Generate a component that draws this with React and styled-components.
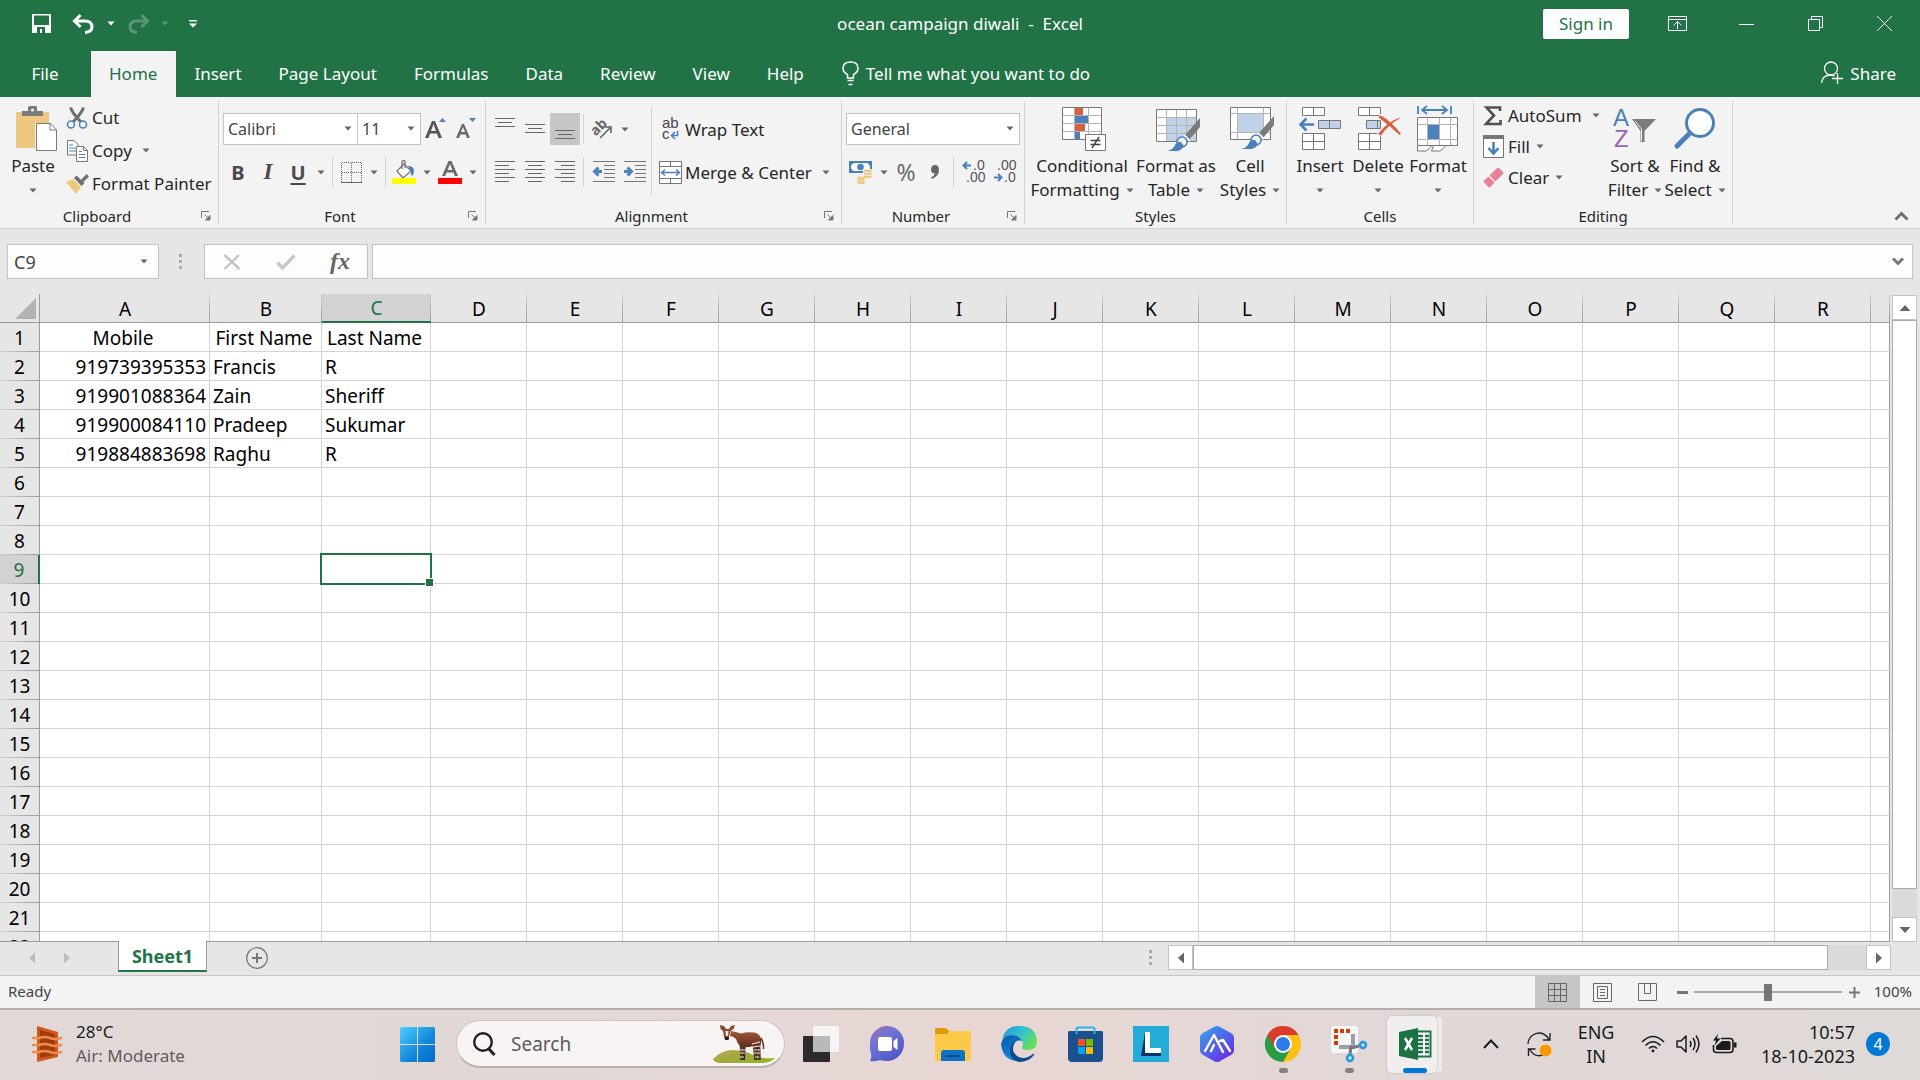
import React from 'react';
import styled, { createGlobalStyle } from 'styled-components';

const colors = {
  green: '#217346',
  ribbon: '#f3f3f3',
  chrome: '#e6e6e6',
  line: '#d2d2d2',
  grid: '#d4d4d4',
  edge: '#9b9b9b',
  box: '#c3c3c3',
  text: '#262626',
  icon: '#6a6a6a',
  blue: '#4a81bb',
  sky: '#bfd2e8',
  tan: '#eec87f',
  red: '#d9603f'
};

const uiFont = "'Noto Sans', 'Open Sans', sans-serif";

const GlobalStyle = createGlobalStyle`
  * {
    box-sizing: border-box;
  }

  body {
    margin: 0;
    font-family: ${uiFont};
    color: ${colors.text};
  }

  button, input, select {
    font-family: inherit;
    color: inherit;
  }

  button {
    padding: 0;
    border: 0;
    background: none;
    cursor: pointer;
  }

  svg {
    display: block;
    flex-shrink: 0;
    overflow: visible;
  }
`;

const AppWrapper = styled.div`
  display: flex;
  flex-direction: column;
  height: 100vh;
  overflow: hidden;
  background: ${colors.chrome};
`;

/* Title bar */

const TitleBar = styled.header`
  display: grid;
  grid-template-columns: 1fr auto 1fr;
  align-items: center;
  height: 51px;
  padding-bottom: 4px;
  background: ${colors.green};
  color: #fff;
`;

const QuickAccess = styled.div`
  display: flex;
  align-items: center;
  padding-left: 20px;
`;

const QuickButton = styled.button`
  display: flex;
  justify-content: center;
  align-items: center;
  width: ${({ $width }) => $width}px;
  height: 40px;
  opacity: ${({ disabled }) => (disabled ? 0.25 : 1)};
`;

const DocTitle = styled.h1`
  margin: 0;
  font-size: 17px;
  font-weight: 400;
  white-space: pre;
`;

const WindowControls = styled.div`
  display: flex;
  align-items: center;
  justify-content: flex-end;
  padding-right: 1px;
`;

const SignIn = styled.button`
  width: 86px;
  height: 30px;
  margin-right: 14px;
  border-radius: 2px;
  background: #fff;
  color: ${colors.green};
  font-size: 17px;
`;

const WindowButton = styled.button`
  display: flex;
  justify-content: center;
  align-items: center;
  width: 69px;
  height: 44px;
`;

/* Ribbon tabs */

const TabRow = styled.nav`
  display: flex;
  height: 46px;
  background: ${colors.green};
  color: #fff;
  font-size: 17px;
`;

const RibbonTab = styled.button`
  padding: 0 19px 2px 18px;
  min-width: ${({ $first }) => ($first ? '91px' : '0')};
  background: ${({ $active }) => ($active ? colors.ribbon : 'transparent')};
  color: ${({ $active }) => ($active ? colors.green : '#fff')};
  font-size: 17px;
`;

const TabAction = styled.button`
  display: flex;
  align-items: center;
  gap: 7px;
  margin-left: ${({ $end }) => ($end ? 'auto' : '19px')};
  padding-right: ${({ $end }) => ($end ? '24px' : '0')};
  padding-bottom: 2px;
  font-size: 17px;
`;

/* Ribbon */

const Ribbon = styled.section`
  display: flex;
  background: ${colors.ribbon};
  border-bottom: 1px solid ${colors.line};
`;

const Group = styled.div`
  display: flex;
  flex-direction: column;
  flex: 0 0 ${({ $width }) => $width}px;
  padding-bottom: 2px;
`;

const GroupBody = styled.div`
  display: flex;
  height: 109px;
  padding-left: 4px;
`;

const GroupFooter = styled.div`
  display: flex;
  align-items: center;
  height: 20px;
  font-size: 15px;
`;

const GroupName = styled.span`
  flex: 1;
  text-align: center;
`;

const Launcher = styled.button`
  display: flex;
  justify-content: center;
  width: 24px;
`;

const Divider = styled.div`
  width: 1px;
  margin: 4px 0;
  background: ${colors.line};
`;

const Collapse = styled.button`
  align-self: flex-end;
  margin: 0 11px 7px auto;
`;

const BigButton = styled.button`
  display: flex;
  flex-direction: column;
  align-items: center;
  width: ${({ $width }) => $width}px;
  padding-top: 7px;
  font-size: 17px;
  line-height: 24px;
  white-space: nowrap;
`;

const BigIcon = styled.span`
  display: flex;
  justify-content: center;
  align-items: center;
  height: 50px;
`;

const BigLine = styled.span`
  display: flex;
  justify-content: center;
  align-items: center;
  gap: 6px;
  height: 24px;
`;

const ButtonColumn = styled.div`
  display: flex;
  flex-direction: column;
  flex: none;
  align-items: flex-start;
  width: ${({ $width }) => $width}px;
  padding-top: ${({ $top }) => $top}px;
  padding-left: ${({ $left }) => $left}px;
`;

const SmallButton = styled.button`
  display: flex;
  align-items: center;
  gap: 4px;
  height: ${({ $height }) => $height}px;
  font-size: 17px;
  white-space: nowrap;
`;

const SmallIcon = styled.span`
  display: flex;
  justify-content: center;
  width: 22px;
`;

const SmallArrow = styled.span`
  padding-left: ${({ $gap }) => $gap}px;
`;

const ControlStack = styled.div`
  display: flex;
  flex-direction: column;
  gap: 12px;
  padding-top: 16px;
`;

const ControlRow = styled.div`
  display: flex;
  align-items: center;
  height: ${({ $height }) => $height}px;
`;

const IconButton = styled.button`
  display: flex;
  justify-content: center;
  align-items: center;
  width: ${({ $width }) => $width || 30}px;
  height: 100%;
  background: ${({ $pressed }) => ($pressed ? '#c6c6c6' : 'none')};
  color: #4a4a4a;
  font-size: 20px;
  font-weight: 700;
`;

const Italic = styled.i`
  font-family: 'Liberation Serif', serif;
  font-size: 23px;
`;

const Underline = styled.span`
  text-decoration: underline 2px;
  text-underline-offset: 3px;
`;

const Percent = styled.span`
  color: ${colors.icon};
  font-size: 23px;
  font-weight: 400;
`;

const RowDivider = styled.div`
  width: 1px;
  height: 30px;
  margin: 0 3px;
  background: ${colors.line};
`;

const TallDivider = styled.div`
  width: 1px;
  height: 88px;
  margin: 10px 7px 0 2px;
  background: ${colors.line};
`;

const SelectWrapper = styled.div`
  position: relative;
  width: ${({ $width }) => $width}px;
  height: 32px;
  margin-right: ${({ $join }) => ($join ? '-1px' : '0')};

  svg {
    position: absolute;
    top: 13px;
    right: 6px;
    pointer-events: none;
  }
`;

const Select = styled.select`
  width: 100%;
  height: 100%;
  padding: 0 4px;
  border: 1px solid ${colors.box};
  border-radius: 0;
  background: #fff;
  appearance: none;
  color: #444;
  font-size: 16px;
`;

/* Formula bar */

const FormulaBar = styled.section`
  display: flex;
  align-items: center;
  padding: 15px 7px;
  height: 65px;
`;

const NameBox = styled.div`
  display: flex;
  width: 152px;
  height: 35px;
  border: 1px solid ${colors.box};
  background: #fdfdfd;
`;

const NameInput = styled.input`
  flex: 1;
  min-width: 0;
  padding: 0 6px;
  border: 0;
  background: none;
  color: #444;
  font-size: 18px;
`;

const NameArrow = styled.button`
  display: flex;
  justify-content: center;
  align-items: center;
  width: 28px;
`;

const Grip = styled.div`
  display: flex;
  justify-content: center;
  width: 45px;
  padding-right: 2px;
`;

const FormulaButtons = styled.div`
  display: flex;
  width: 164px;
  height: 35px;
  margin-right: 4px;
  border: 1px solid ${colors.box};
  background: #fdfdfd;
`;

const FormulaButton = styled.button`
  display: flex;
  flex: 1;
  justify-content: center;
  align-items: center;
  color: #666;
  font-family: 'Liberation Serif', serif;
  font-size: 24px;
  font-style: italic;
  font-weight: 700;
`;

const FormulaField = styled.div`
  display: flex;
  flex: 1;
  height: 35px;
  border: 1px solid ${colors.box};
  background: #fdfdfd;
`;

const FormulaInput = styled.input`
  flex: 1;
  border: 0;
  background: none;
  font-size: 18px;
`;

/* Sheet */

const SheetArea = styled.main`
  display: flex;
  flex: 1;
  min-height: 0;
`;

const GridViewport = styled.div`
  flex: 1;
  overflow: hidden;
  border-bottom: 1px solid ${colors.edge};
`;

const Grid = styled.table`
  width: 100%;
  table-layout: fixed;
  border-collapse: separate;
  border-spacing: 0;
  color: #000;
  font-size: 19px;
  line-height: 28px;
`;

const GridCol = styled.col`
  width: ${({ $width }) => ($width ? `${$width}px` : 'auto')};
`;

const Corner = styled.th`
  height: 29px;
  padding: 0;
  border-right: 1px solid ${colors.edge};
  border-bottom: 1px solid ${colors.edge};

  svg {
    margin: 0 3px 0 auto;
  }
`;

const ColHead = styled.th`
  height: 29px;
  padding: 2px 0 0;
  border-bottom: ${({ $active }) => ($active ? `2px solid ${colors.green}` : `1px solid ${colors.edge}`)};
  background: linear-gradient(#d0d0d0, ${colors.edge}) right / 1px 100% no-repeat
    ${({ $active }) => ($active ? '#d2d2d2' : colors.chrome)};
  color: ${({ $active }) => ($active ? colors.green : '#000')};
  font-weight: 400;
  line-height: 25px;
`;

const RowHead = styled.th`
  height: 29px;
  padding: 0;
  border-right: ${({ $active }) => ($active ? `2px solid ${colors.green}` : `1px solid ${colors.edge}`)};
  background: linear-gradient(90deg, #d0d0d0, ${colors.edge}) bottom / 100% 1px no-repeat
    ${({ $active }) => ($active ? '#d2d2d2' : colors.chrome)};
  color: ${({ $active }) => ($active ? colors.green : '#000')};
  font-weight: 400;
`;

const Cell = styled.td`
  position: relative;
  height: 29px;
  padding: 2px ${({ $align }) => ($align === 'center' ? '6px' : '3px')} 0 3px;
  border-right: 1px solid ${({ $last }) => ($last ? colors.edge : colors.grid)};
  border-bottom: 1px solid ${colors.grid};
  background: #fff;
  line-height: 26px;
  text-align: ${({ $align }) => $align || 'left'};
  white-space: nowrap;
`;

const Selection = styled.div`
  position: absolute;
  inset: -2px;
  border: 2px solid ${colors.green};
  z-index: 1;

  &::after {
    content: '';
    position: absolute;
    right: -4px;
    bottom: -4px;
    width: 7px;
    height: 7px;
    border: 1px solid #fff;
    background: ${colors.green};
  }
`;

const VerticalScroll = styled.div`
  display: flex;
  flex-direction: column;
  width: 25px;
  margin: 1px 3px 0 2px;
  background: #dadada;
`;

const ScrollButton = styled.button`
  display: flex;
  justify-content: center;
  align-items: center;
  width: 25px;
  height: 25px;
  border: 1px solid ${colors.box};
  background: #fff;
`;

const VerticalThumb = styled.div`
  flex: 1;
  margin-bottom: 28px;
  border: 1px solid #ababab;
  background: #fff;
`;

/* Sheet tabs */

const SheetBar = styled.section`
  display: flex;
  height: 34px;
  border-bottom: 1px solid #c6c6c6;
`;

const SheetNav = styled.div`
  display: flex;
  align-items: center;
  gap: 23px;
  width: 118px;
  padding: 0 0 2px 26px;
`;

const SheetTab = styled.button`
  width: 89px;
  height: 31px;
  margin-top: -1px;
  border: 1px solid ${colors.edge};
  border-top: 0;
  border-bottom: 2px solid ${colors.green};
  background: #fff;
  color: ${colors.green};
  font-size: 18px;
  font-weight: 700;
  z-index: 1;
`;

const AddSheet = styled.button`
  margin-left: 39px;
  padding-bottom: 2px;
`;

const HorizontalScroll = styled.div`
  display: flex;
  flex: 0 1 723px;
  height: 25px;
  margin: 3px 29px 0 0;
`;

const HorizontalTrack = styled.div`
  display: flex;
  flex: 1;
  background: #dadada;
`;

const HorizontalThumb = styled.div`
  flex: 1;
  margin-right: 38px;
  border: 1px solid #ababab;
  background: #fff;
`;

const SheetGrip = styled.div`
  display: flex;
  align-items: center;
  margin: 0 16px 2px auto;
`;

/* Status bar */

const StatusBar = styled.footer`
  display: flex;
  align-items: center;
  height: 32px;
  background: ${colors.ribbon};
  color: #444;
  font-size: 15px;
`;

const StatusText = styled.span`
  flex: 1;
  padding: 0 0 2px 8px;
`;

const ViewButton = styled.button`
  display: flex;
  justify-content: center;
  align-items: center;
  width: 45px;
  height: 32px;
  background: ${({ $active }) => ($active ? '#c6c6c6' : 'none')};
`;

const ZoomButton = styled.button`
  display: flex;
  justify-content: center;
  align-items: center;
  width: 24px;
  height: 32px;
`;

const ZoomSlider = styled.input`
  width: 148px;
  height: 18px;
  margin: 0;
  appearance: none;
  background: linear-gradient(#ababab, #ababab) center / 100% 2px no-repeat;

  &::-webkit-slider-thumb {
    appearance: none;
    width: 8px;
    height: 17px;
    background: #757575;
  }
`;

const ZoomLevel = styled.span`
  width: 54px;
  padding: 0 8px 2px 0;
  text-align: right;
`;

/* Taskbar */

const Taskbar = styled.footer`
  display: flex;
  align-items: center;
  height: 72px;
  padding-bottom: 2px;
  border-top: 2px solid #b3adac;
  background: linear-gradient(90deg, #e1d8d7, #e1d8d6 30%, #e8d6d4 52%, #e0d8d7 75%, #dfd9d8);
  color: #1b1b1b;
`;

const Weather = styled.button`
  display: flex;
  align-items: center;
  gap: 13px;
  flex: 0 1 384px;
  padding-left: 32px;
  font-size: 17px;
  line-height: 24px;
  text-align: left;
`;

const Muted = styled.div`
  color: #5f5b5b;
`;

const TaskButton = styled.button`
  position: relative;
  display: flex;
  justify-content: center;
  align-items: center;
  width: 66px;
  height: 70px;
`;

const ActiveTile = styled.span`
  display: flex;
  justify-content: center;
  align-items: center;
  width: 50px;
  height: 57px;
  margin-right: 6px;
  padding-left: 6px;
  border-radius: 5px;
  background: #f1efee;
  box-shadow: 0 0 2px #aaa4a4, 6px 0 0 -1px #f1ebea;
`;

const Indicator = styled.span`
  position: absolute;
  bottom: 6px;
  width: ${({ $active }) => ($active ? '24px' : '9px')};
  height: 5px;
  border-radius: 3px;
  background: ${({ $active }) => ($active ? '#0078d4' : '#858080')};
`;

const SearchBox = styled.label`
  display: flex;
  align-items: center;
  width: 329px;
  height: 48px;
  margin: 0 3px 0 6px;
  padding: 0 9px 0 16px;
  border: 1px solid #cfc4c3;
  border-bottom: 2px solid #b9afae;
  border-radius: 24px;
  background: #f7f4f3;
`;

const SearchInput = styled.input`
  flex: 1;
  min-width: 0;
  margin-left: 16px;
  padding: 0;
  border: 0;
  background: none;
  font-size: 19px;

  &::placeholder {
    color: #5d5a5a;
    opacity: 1;
  }
`;

const Tray = styled.div`
  display: flex;
  align-items: center;
  gap: 12px;
  margin-left: auto;
  padding-right: 30px;
`;

const TrayButton = styled.button`
  display: flex;
  justify-content: center;
  align-items: center;
  gap: 11px;
  min-width: ${({ $width }) => $width || 24}px;
  font-size: 18px;
  line-height: 24px;
`;

const Clock = styled.time`
  text-align: right;
`;

const Badge = styled.span`
  display: flex;
  justify-content: center;
  align-items: center;
  width: 24px;
  height: 24px;
  border-radius: 50%;
  background: #0078d4;
  color: #fff;
  font-size: 16px;
`;

/* Small glyphs */

const Arrow = ({ color = '#666' }) => (
  <svg width="8" height="5" viewBox="0 0 8 5">
    <path d="M0.500 0.500h7L4 4.500z" fill={color} />
  </svg>
);

const ScrollArrow = ({ turn = 0, color = '#666' }) => (
  <svg width="12" height="12" viewBox="0 0 12 12">
    <path d="M0.500 9L6 3l5.500 6z" fill={color} transform={`rotate(${turn} 6 6)`} />
  </svg>
);

const Dots = () => (
  <svg width="3" height="16" viewBox="0 0 3 16" fill="#a9a9a9">
    <path d="M0 0h3v3H0zM0 6h3v3H0zM0 12h3v3H0z" />
  </svg>
);

const LauncherIcon = () => (
  <svg width="10" height="10" viewBox="0 0 10 10">
    <path d="M0.500 7V0.500H8" fill="none" stroke="#777" />
    <path d="M3.500 3.500L8 8M9 4.500V9H4.500z" fill="#777" stroke="#777" strokeWidth="1" />
  </svg>
);

/* Each entry is the y and the left and right end of a text line */
const Lines = ({ rows, width = 20, height = 22 }) => (
  <svg width={width} height={height} viewBox={`0 0 ${width} ${height}`} stroke="#666">
    {rows.map(([y, from, to]) => (
      <path key={y} d={`M${from} ${y}.5H${to}`} />
    ))}
  </svg>
);

const alignRows = {
  top: [[1, 0, 20], [5, 3, 17], [9, 0, 20]],
  middle: [[7, 0, 20], [11, 3, 17], [15, 0, 20]],
  bottom: [[13, 0, 20], [17, 3, 17], [21, 0, 20]],
  left: [[0, 0, 20], [4, 0, 14], [8, 0, 20], [12, 0, 14], [16, 0, 20], [20, 0, 14]],
  center: [[0, 0, 20], [4, 3, 17], [8, 0, 20], [12, 3, 17], [16, 0, 20], [20, 3, 17]],
  right: [[0, 0, 20], [4, 6, 20], [8, 0, 20], [12, 6, 20], [16, 0, 20], [20, 6, 20]]
};

const IndentIcon = ({ out }) => (
  <svg width="22" height="22" viewBox="0 0 22 22">
    <path d="M0 0.500H22M11 4.500H22M11 8.500H22M11 12.500H22M11 16.500H22M0 20.500H22" stroke="#777" />
    <path
      d={out ? 'M9 10.500H2M5.500 6.500L1.500 10.500l4 4' : 'M0 10.500H7M3.500 6.500l4 4-4 4'}
      fill="none"
      stroke={colors.blue}
      strokeWidth="3"
    />
  </svg>
);

const PasteIcon = () => (
  <svg width="47" height="46" viewBox="-6 0 47 46">
    <rect x="0" y="6" width="33" height="36" rx="1" fill={colors.tan} />
    <path d="M6 10V5h6V1.500Q12 0 13.500 0h6Q21 0 21 1.500V5h6v5z" fill="#7b7b7b" />
    <circle cx="16.500" cy="4" r="1.600" fill="#f3f3f3" />
    <path d="M19 17h15.500L41 23.500V46H19z" fill="#f3f3f3" />
    <path d="M20.500 17.500h14l6 6.500v20.500h-20z" fill="#fff" stroke="#7b7b7b" />
    <path d="M34 17.500V24h6.500" fill="none" stroke="#7b7b7b" />
  </svg>
);

const CutIcon = () => (
  <svg width="20" height="22" viewBox="0 0 20 22" fill="none">
    <path d="M3.500 0.500C5 5 9 10 14 15M16.500 0.500C15 5 11 10 6 15" stroke="#6f6f6f" strokeWidth="3" />
    <circle cx="4" cy="17.500" r="3.500" fill="#f3f3f3" stroke={colors.blue} strokeWidth="1.500" />
    <circle cx="16" cy="17.500" r="3.500" fill="#f3f3f3" stroke={colors.blue} strokeWidth="1.500" />
  </svg>
);

const CopyIcon = () => (
  <svg width="21" height="22" viewBox="0 0 21 22">
    <path d="M0.500 0.500h6.500l4 4v10.500h-10.500z" fill="#fff" stroke="#777" />
    <path d="M2 5h4M2 8h7M2 11h7" stroke={colors.blue} />
    <path d="M9.500 6.500h7l4 4v11h-11z" fill="#fff" stroke="#777" />
    <path d="M16.500 6.500v4h4" fill="none" stroke="#777" />
    <path d="M12 11.500h3M12 14.500h6.500M12 17.500h6.500" stroke={colors.blue} />
  </svg>
);

const PainterIcon = () => (
  <svg width="23" height="21" viewBox="0 0 23 21">
    <path d="M0 9l7-3 8 8-5 7z" fill={colors.tan} />
    <path d="M8 5l2.500-2.500 8 7.500-3 3z" fill="#707070" />
    <path d="M15 7l5.500-6 2.500 2.500L17.500 9z" fill="#707070" />
  </svg>
);

const GrowFont = ({ shrink }) => (
  <svg width="22" height="22" viewBox="0 0 22 22">
    {shrink ? (
      <path d="M1 20L7 6h2l6 14h-3l-1.300-3.500H5.300L4 20zM6 14h4L8 9z" fill="#6a6a6a" fillRule="evenodd" />
    ) : (
      <path d="M0 20L7 3h3l7 17h-3.500l-1.500-4.500H5L3.500 20zM6 13h5L8.500 6z" fill="#555" fillRule="evenodd" />
    )}
    <path d={shrink ? 'M14 0h7l-3.500 4z' : 'M14 4h7L17.500 0z'} fill={colors.blue} />
  </svg>
);

const BordersIcon = () => (
  <svg width="21" height="21" viewBox="0 0 21 21" fill="none" stroke="#666">
    <path d="M0.500 20V0.500H20.500V20M10.500 1V20M1 10.500H20" strokeDasharray="1 1" />
    <path d="M0 20.500H21" />
  </svg>
);

const FillColorIcon = () => (
  <svg width="24" height="24" viewBox="0 0 24 24">
    <path d="M5 11L12 4l7 7-8 7z" fill="#fff" stroke="#777" strokeWidth="1.300" />
    <path d="M10 9V2Q10 0.500 11.500 0.500T13 2v6" fill="none" stroke="#777" strokeWidth="1.300" />
    <path d="M16 6Q22 6 22 11q0 4-2.500 5Q19.500 11 16 6z" fill={colors.blue} />
    <path d="M0 18h24v6H0z" fill="#ff0" />
  </svg>
);

const FontColorIcon = () => (
  <svg width="24" height="24" viewBox="0 0 24 24">
    <path d="M4 16L10.500 1h3L20 16h-3.200l-1.400-3.600H8.600L7.200 16zM9.600 10h4.800L12 4z" fill="#6a6a6a" fillRule="evenodd" />
    <path d="M0 18h24v6H0z" fill="#f00" />
  </svg>
);

const IconLetter = styled.text`
  font-family: ${({ $plain }) => ($plain ? "'Liberation Sans', sans-serif" : uiFont)};
  font-size: ${({ $size }) => $size}px;
  font-weight: ${({ $bold }) => ($bold ? 700 : 400)};
`;

const OrientationIcon = () => (
  <svg width="21" height="20" viewBox="0 0 21 20">
    <g transform="rotate(-45 8 9)">
      <IconLetter x="-1" y="12" fill="#666" $size={14} $bold>ab</IconLetter>
    </g>
    <path d="M8 19L18.500 8.500M13 8h6v6" fill="none" stroke="#666" strokeWidth="1.600" />
  </svg>
);

const WrapIcon = () => (
  <svg width="19" height="24" viewBox="0 0 19 24">
    <IconLetter x="1" y="11" fill="#444" $size={15} $plain>ab</IconLetter>
    <IconLetter x="1" y="22" fill="#444" $size={15} $plain>c</IconLetter>
    <path d="M16.500 14v4.500H11M14 15l-3.500 3.500L14 22" fill="none" stroke={colors.blue} strokeWidth="1.600" />
  </svg>
);

const MergeIcon = () => (
  <svg width="23" height="23" viewBox="0 0 23 23">
    <path d="M0.500 0.500h22v22h-22zM0.500 5.500h22M0.500 17.500h22M11.500 0v5.500M11.500 17.500v5" fill="#fff" stroke="#777" />
    <path d="M3 11.500h17M6 8.500l-3.500 3L6 14.500M17 8.500l3.500 3-3.500 3" fill="none" stroke={colors.blue} strokeWidth="1.500" />
  </svg>
);

const CurrencyIcon = () => (
  <svg width="24" height="23" viewBox="0 0 24 23">
    <path d="M0 0h23v12H0z" fill={colors.blue} />
    <path d="M2 4.500L4.500 2h14L21 4.500v3L18.500 10h-14L2 7.500z" fill="#fff" />
    <circle cx="11.500" cy="6" r="3.300" fill={colors.blue} />
    <path d="M14 8h9v10h-6v5H8v-7h6z" fill="#f3f3f3" />
    <g fill="none" stroke={colors.tan} strokeWidth="2" strokeLinecap="round">
      <path d="M16 9.500q3 1 6 0M16 12.500q3 1 6 0M16 15.500q3 1 6 0M9 16.500q3.500 1 6 0M9 19q3.500 1 6 0M9 21.500q3.500 1 6 0" />
    </g>
  </svg>
);

const CommaIcon = () => (
  <svg width="10" height="15" viewBox="0 0 10 15">
    <path d="M5 0Q9 0 9 5 9 11 2 14L1 12.500Q4.500 10.500 5 8.500 1 8.500 1 4.500 1 0 5 0z" fill="#666" />
  </svg>
);

const DecimalIcon = ({ less }) => (
  <svg width="24" height="24" viewBox="0 0 24 24">
    <IconLetter x={less ? 4 : 11} y="10" fill="#555" $size={14} $plain>{less ? '.00' : '.0'}</IconLetter>
    <IconLetter x={less ? 11 : 4} y="22" fill="#555" $size={14} $plain>{less ? '.0' : '.00'}</IconLetter>
    <path
      d={less ? 'M1 17.500h7M5 14l3.500 3.500L5 21' : 'M2 5.500h7M5 2L1.500 5.500 5 9'}
      fill="none"
      stroke={colors.blue}
      strokeWidth="2"
    />
  </svg>
);

const ConditionalIcon = () => (
  <svg width="48" height="44" viewBox="-4 0 48 44">
    <path d="M0.500 0.500h39v32h-39z" fill="#fff" />
    <path d="M0 8.500h39M0 16.500h39M0 24.500h39M12.500 0v32M26.500 0v32" stroke="#b4b4b4" />
    <path d="M0.500 0.500h39v32h-39z" fill="none" stroke="#777" />
    <path d="M13 1h8v7h-8zM13 17h10v7H13z" fill={colors.red} />
    <path d="M13 9h13v7H13zM13 25h5v7h-5z" fill={colors.blue} />
    <path d="M23.500 27.500h20v16h-20z" fill="#fff" stroke="#777" />
    <path d="M28.500 33.500h10M28.500 37.500h10M37 30l-7 11" stroke="#444" strokeWidth="1.400" />
  </svg>
);

const Brush = () => (
  <g>
    <path d="M44 9v9L33 31l-5-4z" fill="#7b7b7b" />
    <path d="M28 26l6 6" stroke="#f3f3f3" strokeWidth="2" />
    <circle cx="26" cy="33" r="5" fill="#f3f3f3" stroke={colors.blue} strokeWidth="1.500" />
    <path d="M11 42q6-1 8-6 2-4 6-3 2 3 3 4-3 6-10 5z" fill={colors.blue} />
  </g>
);

const TableStyleIcon = () => (
  <svg width="48" height="40" viewBox="-4 0 48 40">
    <path d="M0.500 0.500h40v32h-40z" fill="#fff" />
    <path d="M11 9h29v23H11z" fill={colors.sky} />
    <path d="M0 8.500h40M0 16.500h40M0 24.500h40M10.500 0v32M20.500 0v32M30.500 0v32" stroke="#b4b4b4" />
    <path d="M0.500 0.500h40v32h-40z" fill="none" stroke="#777" />
    <Brush />
  </svg>
);

const CellStyleIcon = () => (
  <svg width="48" height="44" viewBox="-4 0 48 44">
    <path d="M0.500 0.500h40v32h-40z" fill="#fff" />
    <path d="M0 6.500h40M0 25.500h40M7.500 0v32M33.500 0v32" stroke="#b4b4b4" />
    <path d="M8 7h25v18H8z" fill={colors.sky} />
    <path d="M0.500 0.500h40v32h-40z" fill="none" stroke="#777" />
    <Brush />
  </svg>
);

const CellBlocks = () => (
  <path
    d="M0.500 0.500h22v8h-22zM11.500 0.500v8M0.500 26.500h22v16h-22zM11.500 26.500v16M0.500 34.500h22"
    fill="#fff"
    stroke="#777"
  />
);

const InsertIcon = () => (
  <svg width="44" height="44" viewBox="0 0 44 44">
    <g transform="translate(4 0)"><CellBlocks /></g>
    <path d="M20.500 13.500h22v8h-22zM31.500 13.500v8" fill={colors.sky} stroke="#777" />
    <path d="M16 17.500H3M8.500 11.500l-6 6 6 6" fill="none" stroke={colors.blue} strokeWidth="2.600" />
  </svg>
);

const DeleteIcon = () => (
  <svg width="48" height="44" viewBox="-4 0 48 44">
    <CellBlocks />
    <path d="M8.500 13.500h14v8h-14zM19.500 13.500v8" fill={colors.sky} stroke="#777" />
    <path d="M21 9Q32 15 42 28M42 11Q29 17 21 28" fill="none" stroke="#f3f3f3" strokeWidth="5" />
    <path d="M20 10l3-1.500Q34 15 43 27l-1.500 1Q31 18 20 10zM42 10.500l-.5 1Q30 18 23 28.500L20 27Q29 15 42 10.500z" fill={colors.red} />
  </svg>
);

const FormatIcon = () => (
  <svg width="42" height="46" viewBox="0 0 42 46">
    <path d="M1 0v8M34 0v8M5 4h25M10 0L5 4l5 4M25 0l5 4-5 4" fill="none" stroke={colors.blue} strokeWidth="1.800" />
    <path d="M0.500 11.500h40v28h-40z" fill="#fff" />
    <path d="M0 18.500h40M0 33.500h40M10.500 11v28M22.500 11v28M33.500 11v28" stroke="#b4b4b4" />
    <path d="M0.500 11.500h40v28h-40z" fill="none" stroke="#777" />
    <path d="M11 19h11v14H11z" fill={colors.blue} />
    <path d="M0.500 40v5h9l5-5M16.500 40l-2 5h9l5-5" fill="#fff" stroke="#777" />
  </svg>
);

const SigmaIcon = () => (
  <svg width="18" height="20" viewBox="0 0 18 20">
    <path d="M16 5V1.500H2.500L10 9.500 2 18h14.500V14" fill="none" stroke="#505050" strokeWidth="2.600" />
  </svg>
);

const FillDownIcon = () => (
  <svg width="21" height="23" viewBox="0 0 21 23">
    <path d="M0.500 0.500h20v22h-20z" fill="#fff" stroke="#777" />
    <path d="M0 0h21v4H0z" fill="#777" />
    <path d="M10.500 7v11M5.500 13l5 5.500 5-5.500" fill="none" stroke={colors.blue} strokeWidth="2.600" />
  </svg>
);

const EraserIcon = () => (
  <svg width="21" height="21" viewBox="0 0 21 21" fill="#e78397">
    <path d="M6.500 8.500L14 1q1-1 2 0l4 4q1 1 0 2l-7.500 7.500z" />
    <path d="M5.500 9.500l6 6-4 4.500q-1 .8-2 0L1 15.500q-.8-1 0-2z" />
  </svg>
);

const SortIcon = () => (
  <svg width="42" height="42" viewBox="0 0 42 42">
    <IconLetter x="-1" y="18" fill={colors.blue} $size={24} $plain>A</IconLetter>
    <IconLetter x="0" y="39" fill="#9463b6" $size={24} $plain>Z</IconLetter>
    <path d="M18 11h24L30.500 23v11h-4V23z" fill="#7b7b7b" />
    <path d="M21 13l6.500 8v12" fill="none" stroke="#f3f3f3" />
  </svg>
);

const FindIcon = () => (
  <svg width="42" height="42" viewBox="0 0 42 42">
    <path d="M3 38l13-13" stroke={colors.blue} strokeWidth="5" strokeLinecap="round" />
    <circle cx="26" cy="15" r="13.500" fill="#fff" stroke={colors.blue} strokeWidth="3" />
  </svg>
);

/* Taskbar drawings */

const AirIcon = () => (
  <svg width="31" height="36" viewBox="0 0 31 36">
    <path d="M5 0l21 6v25L5 36z" fill="#d2571a" />
    <path d="M8 4l15 4v21L8 32z" fill="#a13c08" />
    <path d="M1 12h6q6-2 11 0t11 0M1 19h6q6-2 11 0t11 0M1 26h6q6-2 11 0t11 0" fill="none" stroke="#f08a4e" strokeWidth="2.600" strokeLinecap="round" />
  </svg>
);

const StartIcon = () => (
  <svg width="35" height="35" viewBox="0 0 35 35">
    <defs>
      <linearGradient id="start" x1="0" y1="0" x2="1" y2="1">
        <stop offset="0" stopColor="#4dd0ff" />
        <stop offset="0.600" stopColor="#0f86d9" />
        <stop offset="1" stopColor="#0669c4" />
      </linearGradient>
    </defs>
    <path d="M1 0h16v17H0V1zM18 0h16l1 1v16H18zM0 18h17v17H1l-1-1zM18 18h17v16l-1 1H18z" fill="url(#start)" />
  </svg>
);

const SearchIcon = () => (
  <svg width="22" height="24" viewBox="0 0 22 24" fill="none" stroke="#222">
    <circle cx="10" cy="10" r="8.800" strokeWidth="2.400" />
    <path d="M15.500 16.500l6 6.500" strokeWidth="3" />
  </svg>
);

const OkapiIcon = () => (
  <svg width="62" height="38" viewBox="0 0 62 38">
    <defs>
      <linearGradient id="hill" x1="0" y1="0" x2="1" y2="0.600">
        <stop offset="0" stopColor="#c2a95a" />
        <stop offset="0.500" stopColor="#9fa93a" />
        <stop offset="1" stopColor="#8fb524" />
      </linearGradient>
      <linearGradient id="hide" x1="0" y1="0" x2="0" y2="1">
        <stop offset="0" stopColor="#a2583a" />
        <stop offset="1" stopColor="#5e2d1c" />
      </linearGradient>
    </defs>
    <path d="M0 34q9-9 20-9 12 0 22 6 9 3 20 2-4 5-14 5H6q-5-1-6-4z" fill="url(#hill)" />
    <path d="M31 20l-.5 15M44 18l-1 17" stroke="#3a211a" strokeWidth="3" />
    <path d="M18 6Q24 7 28 8.500 34 6.500 41 7.500q6 1 7 6.500 1 5-2 8l-6-1q-8 2.500-13 0-3-3-4-7-3-3-6-3z" fill="url(#hide)" />
    <path d="M7 0l4 1 2 3h3l2-3 4-1-1.500 4-3 2-1.500 6-1 3h-3l-1-3-1-6-2.500-2z" fill="#8c4a30" />
    <path d="M12.500 6h3l-.5 5h-2z" fill="#f1e4da" />
    <path d="M12 12h4l-.5 3h-3z" fill="#2a1a16" />
    <path d="M28 20l.5 15M41 20l1.500 14M46 20l.5 15" stroke="#5b3122" strokeWidth="2.600" />
    <path d="M27 25h5M27 28h5M27 32h4M39 19l8-2M40 22l7-1M41 25h6M41 28h6M42 32h4" stroke="#f4ece6" strokeWidth="1.200" />
    <path d="M48 13q3 5 2.500 11" fill="none" stroke="#6a3623" strokeWidth="1.500" />
  </svg>
);

const TaskViewIcon = () => (
  <svg width="36" height="36" viewBox="0 0 36 36">
    <rect x="0" y="10" width="27" height="26" rx="1" fill="#2b2b2b" />
    <rect x="10" y="0" width="26" height="26" rx="1" fill="#f5f5f5" />
    <path d="M10 10h17v16H10z" fill="#b9b9b9" />
  </svg>
);

const ChatIcon = () => (
  <svg width="35" height="36" viewBox="0 0 35 36">
    <defs>
      <linearGradient id="chat" x1="0" y1="0" x2="0.700" y2="1">
        <stop offset="0" stopColor="#a06fae" />
        <stop offset="0.450" stopColor="#6b74d6" />
        <stop offset="1" stopColor="#5055c6" />
      </linearGradient>
    </defs>
    <path d="M17.500 0A17 17 0 0 1 34 18a17 17 0 0 1-17 17q-4 0-7-1-5 2-10 1 2-4 1-8a17 17 0 0 1-1-9A17 17 0 0 1 17.500 0z" fill="url(#chat)" />
    <rect x="8" y="11" width="14" height="14" rx="2" fill="#fff" />
    <path d="M23.500 15l4-3v12l-4-3z" fill="#fff" />
  </svg>
);

const FolderIcon = () => (
  <svg width="36" height="35" viewBox="0 0 36 35">
    <path d="M0 2q0-1 1-1h9q2 0 3 2l2 2h20q1 0 1 1v10H0z" fill="#dd9b08" />
    <path d="M0 7h12l3-3h20q1 0 1 1v28q0 1-1 1H1q-1 0-1-1z" fill="#fcca48" />
    <path d="M6 34V26q0-3 3-3h18q3 0 3 3v8z" fill="#0f72c4" />
    <path d="M11 29h14" stroke="#084b86" strokeWidth="2" />
  </svg>
);

const EdgeIcon = () => (
  <svg width="36" height="36" viewBox="0 0 36 36">
    <defs>
      <linearGradient id="edgeTop" x1="0" y1="0" x2="1" y2="0.600">
        <stop offset="0" stopColor="#1e8fd8" />
        <stop offset="0.500" stopColor="#33c0d3" />
        <stop offset="1" stopColor="#66e05a" />
      </linearGradient>
      <linearGradient id="edgeLeft" x1="0" y1="0" x2="0.400" y2="1">
        <stop offset="0" stopColor="#0c59a4" />
        <stop offset="1" stopColor="#0d8ae0" />
      </linearGradient>
    </defs>
    <path d="M1 14Q4 0 18 0q17 0 18 15 0 9-9 9-7 0-6-3 2-3 0-6-3-6-10-6-6 0-10 5z" fill="url(#edgeTop)" />
    <path d="M0 18Q2 9 11 9q7 0 10 6-5-2-8 3-4 8 4 17Q2 35 0 18z" fill="url(#edgeLeft)" />
    <path d="M13 18q-3 7 3 12 7 5 16-2 2-1 1 1-5 7-15 7Q9 34 9 25q0-6 6-10-1 1-2 3z" fill="#114a8f" />
  </svg>
);

const StoreIcon = () => (
  <svg width="35" height="36" viewBox="0 0 35 36">
    <path d="M8.500 9V3Q8.500 1.500 10 1.500h15q1.500 0 1.500 1.500v6" fill="none" stroke="#2bb0ea" strokeWidth="2" />
    <path d="M1 5h33l1 1v26q0 4-4 4H4q-4 0-4-4V6z" fill="#19508d" />
    <path d="M10 13h7v7h-7z" fill="#f25022" />
    <path d="M18 13h7v7h-7z" fill="#7fba00" />
    <path d="M10 21h7v7h-7z" fill="#00a4ef" />
    <path d="M18 21h7v7h-7z" fill="#ffb900" />
    <path d="M8.500 5v3M26.500 5v3" stroke="#2bb0ea" strokeWidth="2" />
  </svg>
);

const LIcon = () => (
  <svg width="36" height="36" viewBox="0 0 36 36">
    <path d="M0 0h36v36H0z" fill="#24acd9" />
    <path d="M12 6L8 30h20v-3H12z" fill="#06366c" />
    <path d="M12 6h5v16h11v5H12z" fill="#fff" />
  </svg>
);

const HexIcon = () => (
  <svg width="34" height="36" viewBox="0 0 34 36">
    <defs>
      <linearGradient id="hex" x1="0" y1="0" x2="0.800" y2="1">
        <stop offset="0" stopColor="#35a7ee" />
        <stop offset="1" stopColor="#6a2ae6" />
      </linearGradient>
    </defs>
    <path d="M17 0q2 0 4 1.500l10 5.500q3 2 3 4v14q0 2-3 4l-10 5.500Q19 36 17 36t-4-1.500L3 29q-3-2-3-4V11q0-2 3-4l10-5.500Q15 0 17 0z" fill="url(#hex)" />
    <path d="M5 25L14 9l9 17M11 25l3-6M20 15l3-1 7 11" fill="none" stroke="#fff" strokeWidth="2.400" strokeLinecap="round" strokeLinejoin="round" />
  </svg>
);

const ChromeIcon = () => (
  <svg width="36" height="36" viewBox="0 0 36 36">
    <path d="M18 18L2.400 9A18 18 0 0 1 33.600 9z" fill="#dc3a2c" />
    <path d="M18 18L33.600 9A18 18 0 0 1 18 36z" fill="#fbc116" />
    <path d="M18 18V36A18 18 0 0 1 2.400 9z" fill="#2a9a45" />
    <path d="M18 9h15.600A18 18 0 0 1 35.900 16L25 17z" fill="#fbc116" />
    <path d="M25.800 22.500L18 36l-4-11z" fill="#2a9a45" />
    <path d="M10.200 22.500L2.400 9 12 11z" fill="#dc3a2c" />
    <circle cx="18" cy="18" r="9" fill="#fff" />
    <circle cx="18" cy="18" r="7" fill="#2f7bea" />
  </svg>
);

const SnipIcon = () => (
  <svg width="37" height="37" viewBox="0 0 37 37">
    <rect width="27" height="27" rx="3" fill="#f3f6f9" />
    <path d="M5 19V5h15" fill="none" stroke="#d83b01" strokeWidth="4" strokeDasharray="4 2" />
    <path d="M22 8v13M8 21h14" stroke="#9aa0a6" strokeWidth="4" />
    <path d="M20 20l-1 8M20 22l8-2" stroke="#777" strokeWidth="3" />
    <circle cx="19" cy="32" r="3" fill="none" stroke="#1d9be0" strokeWidth="2.400" />
    <circle cx="32" cy="19" r="3" fill="none" stroke="#1d9be0" strokeWidth="2.400" />
  </svg>
);

const ExcelIcon = () => (
  <svg width="33" height="32" viewBox="0 0 33 32">
    <path d="M18 3.500h13.500v25H18z" fill="#fff" stroke="#1e7145" strokeWidth="2" />
    <path d="M19 8h5M26 8h4M19 12h5M26 12h4M19 16h5M26 16h4M19 20h5M26 20h4M19 24h5M26 24h4" stroke="#1e7145" strokeWidth="2.400" />
    <path d="M0 4l19-4v32L0 28z" fill="#1e7145" />
    <path d="M6 10l7 12M13 10L6 22" stroke="#fff" strokeWidth="2.600" />
  </svg>
);

const SyncIcon = () => (
  <svg width="25" height="25" viewBox="0 0 25 25">
    <path d="M1 12A11 11 0 0 1 22 7.500M23 1v7h-7M18 22Q8 27 2.500 17M1.500 24v-7h7" fill="none" stroke="#222" strokeWidth="1.400" />
    <circle cx="18.500" cy="18.500" r="6" fill="#ff9800" />
  </svg>
);

const WifiIcon = () => (
  <svg width="24" height="18" viewBox="0 0 24 18" fill="none" stroke="#1b1b1b" strokeWidth="1.600">
    <path d="M1 7q11-11 22 0M4.500 10.500q7.500-7.500 15 0M8 13.500q4-4 8 0" />
    <circle cx="12" cy="16" r="1.400" fill="#1b1b1b" stroke="none" />
  </svg>
);

const VolumeIcon = () => (
  <svg width="25" height="20" viewBox="0 0 25 20" fill="none" stroke="#1b1b1b" strokeWidth="1.500">
    <path d="M1 7v6h4l5 5V2L5 7zM14 7q2 3 0 6M17 4q4 6 0 12M20 1.500q6 8.500 0 17" strokeLinejoin="round" />
  </svg>
);

const BatteryIcon = () => (
  <svg width="25" height="20" viewBox="0 0 25 20">
    <path d="M9 4.500h9q3 0 3 3v8q0 3-3 3H4.500q-3 0-3-3V11" fill="none" stroke="#1b1b1b" strokeWidth="1.600" />
    <path d="M10 7h7q1.500 0 1.500 1.500v6Q18.500 16 17 16H5.500Q4 16 4 14.500V12z" fill="#1b1b1b" />
    <path d="M22 8.500h2.500v5H22zM6 0L1 6.500h3L2.500 11.500l6-7H5z" fill="#1b1b1b" />
  </svg>
);

/* Data */

const ribbonTabs = ['File', 'Home', 'Insert', 'Page Layout', 'Formulas', 'Data', 'Review', 'View', 'Help'];

const columns = [
  { name: 'A', width: 170 },
  { name: 'B', width: 112 },
  { name: 'C', width: 109 },
  ...'DEFGHIJKLMNOPQR'.split('').map((name) => ({ name, width: 96 })),
  { name: '' }
];

const sheetData = [
  ['Mobile', 'First Name', 'Last Name'],
  ['919739395353', 'Francis', 'R'],
  ['919901088364', 'Zain', 'Sheriff'],
  ['919900084110', 'Pradeep', 'Sukumar'],
  ['919884883698', 'Raghu', 'R']
];

const rowCount = 22;
const selected = { row: 8, col: 2 };

const pinnedApps = [
  { label: 'Task view', icon: <TaskViewIcon /> },
  { label: 'Chat', icon: <ChatIcon /> },
  { label: 'File Explorer', icon: <FolderIcon /> },
  { label: 'Edge', icon: <EdgeIcon /> },
  { label: 'Store', icon: <StoreIcon /> },
  { label: 'L', icon: <LIcon /> },
  { label: 'Design app', icon: <HexIcon /> },
  { label: 'Chrome', icon: <ChromeIcon />, running: true },
  { label: 'Snipping Tool', icon: <SnipIcon />, running: true }
];

const cellAlign = (row, col) => {
  if (row === 0) return 'center';
  return col === 0 ? 'right' : 'left';
};

/* Composed parts */

const RibbonGroup = ({ name, width, launcher, children }) => (
  <>
    <Group $width={width}>
      <GroupBody>{children}</GroupBody>
      <GroupFooter>
        <GroupName>{name}</GroupName>
        {launcher && (
          <Launcher aria-label={`${name} settings`}>
            <LauncherIcon />
          </Launcher>
        )}
      </GroupFooter>
    </Group>
    <Divider />
  </>
);

const BigCommand = ({ icon, first, second, width }) => (
  <BigButton $width={width}>
    <BigIcon>{icon}</BigIcon>
    <BigLine>{first}</BigLine>
    <BigLine>
      {second}
      <Arrow />
    </BigLine>
  </BigButton>
);

const SmallCommand = ({ icon, label, height, arrowGap }) => (
  <SmallButton $height={height}>
    <SmallIcon>{icon}</SmallIcon>
    {label}
    {arrowGap !== undefined && (
      <SmallArrow $gap={arrowGap}>
        <Arrow />
      </SmallArrow>
    )}
  </SmallButton>
);

const DropDown = ({ label, value, width, join }) => (
  <SelectWrapper $width={width} $join={join}>
    <Select aria-label={label} defaultValue={value}>
      <option>{value}</option>
    </Select>
    <Arrow />
  </SelectWrapper>
);

const ArrowButton = ({ label }) => (
  <IconButton $width={16} aria-label={label}>
    <Arrow />
  </IconButton>
);

const App = () => (
  <>
    <GlobalStyle />
    <AppWrapper>
      <TitleBar>
        <QuickAccess>
          <QuickButton $width={42} aria-label="Save">
            <svg width="19" height="19" viewBox="0 0 19 19">
              <path d="M0 0h19v19H0zM2 1.500V11h15V1.500zM5 13v6h8v-6zM8 15h2v4H8z" fill="#fff" fillRule="evenodd" />
            </svg>
          </QuickButton>
          <QuickButton $width={42} aria-label="Undo">
            <svg width="22" height="20" viewBox="0 0 22 20" fill="none" stroke="#fff" strokeWidth="3">
              <path d="M8.500 1L2.500 7l6 6M3 7h10q7 0 7 6 0 5-7 5.500" />
            </svg>
          </QuickButton>
          <QuickButton $width={14} aria-label="Undo list">
            <Arrow color="#fff" />
          </QuickButton>
          <QuickButton $width={42} disabled aria-label="Redo">
            <svg width="22" height="20" viewBox="0 0 22 20" fill="none" stroke="#fff" strokeWidth="3">
              <path d="M13.500 1l6 6-6 6M19 7H9Q2 7 2 13q0 5 7 5.500" />
            </svg>
          </QuickButton>
          <QuickButton $width={10} disabled aria-label="Redo list">
            <Arrow color="#fff" />
          </QuickButton>
          <QuickButton $width={46} aria-label="Customize">
            <svg width="8" height="8" viewBox="0 0 8 8">
              <path d="M0 0h8v1.500H0zM0 3.500h8l-4 4z" fill="#fff" />
            </svg>
          </QuickButton>
        </QuickAccess>
        <DocTitle>{'ocean campaign diwali  -  Excel'}</DocTitle>
        <WindowControls>
          <SignIn>Sign in</SignIn>
          <WindowButton aria-label="Ribbon display options">
            <svg width="19" height="15" viewBox="0 0 19 15" fill="none" stroke="#fff">
              <path d="M0.500 0.500h18v14h-18zM0.500 3.500h18M9.500 13V6M5.500 9.500l4-4 4 4" />
            </svg>
          </WindowButton>
          <WindowButton aria-label="Minimize">
            <svg width="15" height="15" viewBox="0 0 15 15" stroke="#fff">
              <path d="M0 8.500h15" />
            </svg>
          </WindowButton>
          <WindowButton aria-label="Restore">
            <svg width="15" height="15" viewBox="0 0 15 15" fill="none" stroke="#fff">
              <path d="M0.500 3.500h11v11h-11zM3.500 3.500v-3h11v11h-3" />
            </svg>
          </WindowButton>
          <WindowButton aria-label="Close">
            <svg width="15" height="15" viewBox="0 0 15 15" stroke="#fff">
              <path d="M0 0l15 15M15 0L0 15" />
            </svg>
          </WindowButton>
        </WindowControls>
      </TitleBar>

      <TabRow>
        {ribbonTabs.map((tab, index) => (
          <RibbonTab key={tab} $active={tab === 'Home'} $first={index === 0}>
            {tab}
          </RibbonTab>
        ))}
        <TabAction>
          <svg width="17" height="25" viewBox="0 0 17 25" fill="none" stroke="#fff" strokeWidth="1.500">
            <path d="M5.500 17v-3.500Q1 11 1 7.500 1 1 8.500 1T16 7.500q0 3.500-4.500 6V17zM5.500 19.500h6M6.500 23.500h4" />
          </svg>
          Tell me what you want to do
        </TabAction>
        <TabAction $end>
          <svg width="22" height="24" viewBox="0 0 22 24" fill="none" stroke="#fff" strokeWidth="1.300">
            <circle cx="10" cy="7.500" r="6.500" />
            <path d="M0.500 22q1-8 9-8 2 0 4 1M16.500 12v11M11 17.500h11" />
          </svg>
          Share
        </TabAction>
      </TabRow>

      <Ribbon>
        <RibbonGroup name="Clipboard" width={218} launcher>
          <BigCommand icon={<PasteIcon />} first="Paste" width={58} />
          <ButtonColumn $top={4} $left={4}>
            <SmallCommand icon={<CutIcon />} label="Cut" height={33} />
            <SmallCommand icon={<CopyIcon />} label="Copy" height={33} arrowGap={6} />
            <SmallCommand icon={<PainterIcon />} label="Format Painter" height={33} />
          </ButtonColumn>
        </RibbonGroup>

        <RibbonGroup name="Font" width={266} launcher>
          <ControlStack>
            <ControlRow $height={32}>
              <DropDown label="Font" value="Calibri" width={135} join />
              <DropDown label="Font size" value="11" width={64} />
              <IconButton aria-label="Increase font size"><GrowFont /></IconButton>
              <IconButton aria-label="Decrease font size"><GrowFont shrink /></IconButton>
            </ControlRow>
            <ControlRow $height={30}>
              <IconButton>B</IconButton>
              <IconButton><Italic>I</Italic></IconButton>
              <IconButton><Underline>U</Underline></IconButton>
              <ArrowButton label="Underline styles" />
              <RowDivider />
              <IconButton aria-label="Borders"><BordersIcon /></IconButton>
              <ArrowButton label="Border styles" />
              <RowDivider />
              <IconButton aria-label="Fill colour"><FillColorIcon /></IconButton>
              <ArrowButton label="Fill colours" />
              <IconButton aria-label="Font colour"><FontColorIcon /></IconButton>
              <ArrowButton label="Font colours" />
            </ControlRow>
          </ControlStack>
        </RibbonGroup>

        <RibbonGroup name="Alignment" width={355} launcher>
          <ControlStack>
            <ControlRow $height={32}>
              <IconButton aria-label="Top align"><Lines rows={alignRows.top} height={24} /></IconButton>
              <IconButton aria-label="Middle align"><Lines rows={alignRows.middle} height={24} /></IconButton>
              <IconButton $pressed aria-label="Bottom align"><Lines rows={alignRows.bottom} height={24} /></IconButton>
              <RowDivider />
              <IconButton aria-label="Orientation"><OrientationIcon /></IconButton>
              <ArrowButton label="Orientation options" />
            </ControlRow>
            <ControlRow $height={30}>
              <IconButton aria-label="Align left"><Lines rows={alignRows.left} /></IconButton>
              <IconButton aria-label="Center"><Lines rows={alignRows.center} /></IconButton>
              <IconButton aria-label="Align right"><Lines rows={alignRows.right} /></IconButton>
              <RowDivider />
              <IconButton $width={34} aria-label="Decrease indent"><IndentIcon out /></IconButton>
              <IconButton $width={28} aria-label="Increase indent"><IndentIcon /></IconButton>
            </ControlRow>
          </ControlStack>
          <TallDivider />
          <ControlStack>
            <SmallCommand icon={<WrapIcon />} label="Wrap Text" height={32} />
            <SmallCommand icon={<MergeIcon />} label="Merge & Center" height={30} arrowGap={6} />
          </ControlStack>
        </RibbonGroup>

        <RibbonGroup name="Number" width={182} launcher>
          <ControlStack>
            <ControlRow $height={32}>
              <DropDown label="Number format" value="General" width={174} />
            </ControlRow>
            <ControlRow $height={30}>
              <IconButton aria-label="Accounting format"><CurrencyIcon /></IconButton>
              <ArrowButton label="Currencies" />
              <IconButton $width={28}><Percent>%</Percent></IconButton>
              <IconButton aria-label="Comma style"><CommaIcon /></IconButton>
              <RowDivider />
              <IconButton $width={34} aria-label="Increase decimal"><DecimalIcon /></IconButton>
              <IconButton $width={28} aria-label="Decrease decimal"><DecimalIcon less /></IconButton>
            </ControlRow>
          </ControlStack>
        </RibbonGroup>

        <RibbonGroup name="Styles" width={261}>
          <BigCommand icon={<ConditionalIcon />} first="Conditional" second="Formatting" width={106} />
          <BigCommand icon={<TableStyleIcon />} first="Format as" second="Table" width={82} />
          <BigCommand icon={<CellStyleIcon />} first="Cell" second="Styles" width={66} />
        </RibbonGroup>

        <RibbonGroup name="Cells" width={186}>
          <BigCommand icon={<InsertIcon />} first="Insert" width={58} />
          <BigCommand icon={<DeleteIcon />} first="Delete" width={58} />
          <BigCommand icon={<FormatIcon />} first="Format" width={62} />
        </RibbonGroup>

        <RibbonGroup name="Editing" width={258}>
          <ButtonColumn $top={3} $left={4} $width={128}>
            <SmallCommand icon={<SigmaIcon />} label="AutoSum" height={31} arrowGap={6} />
            <SmallCommand icon={<FillDownIcon />} label="Fill" height={31} arrowGap={2} />
            <SmallCommand icon={<EraserIcon />} label="Clear" height={31} arrowGap={2} />
          </ButtonColumn>
          <BigCommand icon={<SortIcon />} first="Sort &" second="Filter" width={58} />
          <BigCommand icon={<FindIcon />} first="Find &" second="Select" width={62} />
        </RibbonGroup>

        <Collapse aria-label="Collapse the ribbon">
          <svg width="15" height="11" viewBox="0 0 15 11" fill="none" stroke="#707070" strokeWidth="3">
            <path d="M1.500 9.500l6-6 6 6" />
          </svg>
        </Collapse>
      </Ribbon>

      <FormulaBar>
        <NameBox>
          <NameInput aria-label="Name box" defaultValue="C9" />
          <NameArrow aria-label="Names"><Arrow /></NameArrow>
        </NameBox>
        <Grip><Dots /></Grip>
        <FormulaButtons>
          <FormulaButton aria-label="Cancel">
            <svg width="18" height="16" viewBox="0 0 18 16" stroke="#c3c3c3" strokeWidth="2.400">
              <path d="M1.500 1l15 14M16 1L1.500 15" />
            </svg>
          </FormulaButton>
          <FormulaButton aria-label="Enter">
            <svg width="20" height="16" viewBox="0 0 20 16" fill="none" stroke="#c8c8c8" strokeWidth="3.400">
              <path d="M1.500 8.500L6.500 14 18.500 1.500" />
            </svg>
          </FormulaButton>
          <FormulaButton>fx</FormulaButton>
        </FormulaButtons>
        <FormulaField>
          <FormulaInput aria-label="Formula" />
          <NameArrow aria-label="Expand formula bar">
            <svg width="12" height="9" viewBox="0 0 12 9" fill="none" stroke="#777" strokeWidth="3">
              <path d="M1 1.500l5 5 5-5" />
            </svg>
          </NameArrow>
        </FormulaField>
      </FormulaBar>

      <SheetArea>
        <GridViewport>
          <Grid>
            <colgroup>
              <GridCol $width={40} />
              {columns.map((column) => (
                <GridCol key={column.name} $width={column.width} />
              ))}
            </colgroup>
            <thead>
              <tr>
                <Corner>
                  <svg width="21" height="21" viewBox="0 0 21 21">
                    <path d="M21 0v21H0z" fill="#b2b2b2" />
                  </svg>
                </Corner>
                {columns.map((column, col) => (
                  <ColHead key={column.name} $active={col === selected.col}>
                    {column.name}
                  </ColHead>
                ))}
              </tr>
            </thead>
            <tbody>
              {Array.from({ length: rowCount }, (_, row) => (
                <tr key={row}>
                  <RowHead $active={row === selected.row}>{row + 1}</RowHead>
                  {columns.map((column, col) => (
                    <Cell key={column.name} $align={cellAlign(row, col)} $last={!column.name}>
                      {sheetData[row] && sheetData[row][col]}
                      {row === selected.row && col === selected.col && <Selection />}
                    </Cell>
                  ))}
                </tr>
              ))}
            </tbody>
          </Grid>
        </GridViewport>
        <VerticalScroll>
          <ScrollButton aria-label="Scroll up"><ScrollArrow /></ScrollButton>
          <VerticalThumb />
          <ScrollButton aria-label="Scroll down"><ScrollArrow turn={180} /></ScrollButton>
        </VerticalScroll>
      </SheetArea>

      <SheetBar>
        <SheetNav>
          <ScrollArrow turn={270} color="#bdbdbd" />
          <ScrollArrow turn={90} color="#bdbdbd" />
        </SheetNav>
        <SheetTab>Sheet1</SheetTab>
        <AddSheet aria-label="New sheet">
          <svg width="22" height="22" viewBox="0 0 22 22" fill="none" stroke="#777">
            <circle cx="11" cy="11" r="10.300" strokeWidth="1.200" />
            <path d="M11 6v10M6 11h10" strokeWidth="2" />
          </svg>
        </AddSheet>
        <SheetGrip><Dots /></SheetGrip>
        <HorizontalScroll>
          <ScrollButton aria-label="Scroll left"><ScrollArrow turn={270} /></ScrollButton>
          <HorizontalTrack>
            <HorizontalThumb />
          </HorizontalTrack>
          <ScrollButton aria-label="Scroll right"><ScrollArrow turn={90} /></ScrollButton>
        </HorizontalScroll>
      </SheetBar>

      <StatusBar>
        <StatusText>Ready</StatusText>
        <ViewButton $active aria-label="Normal view">
          <svg width="19" height="19" viewBox="0 0 19 19" fill="none" stroke="#666">
            <path d="M0.500 0.500h18v18h-18zM0.500 6.500h18M0.500 12.500h18M6.500 0.500v18M12.500 0.500v18" />
          </svg>
        </ViewButton>
        <ViewButton aria-label="Page layout view">
          <svg width="19" height="19" viewBox="0 0 19 19" fill="none" stroke="#666">
            <path d="M0.500 0.500h18v18h-18zM4.500 3.500h10v12h-10zM7 6.500h5M7 9.500h5M7 12.500h5" />
          </svg>
        </ViewButton>
        <ViewButton aria-label="Page break preview">
          <svg width="19" height="19" viewBox="0 0 19 19" fill="none" stroke="#666">
            <path d="M0.500 0.500h18v17h-18zM6.500 0.500v10h6v-10" />
          </svg>
        </ViewButton>
        <ZoomButton aria-label="Zoom out">
          <svg width="11" height="11" viewBox="0 0 11 11"><path d="M0 4h11v3H0z" fill="#777" /></svg>
        </ZoomButton>
        <ZoomSlider type="range" min="0" max="100" defaultValue="50" aria-label="Zoom" />
        <ZoomButton aria-label="Zoom in">
          <svg width="11" height="11" viewBox="0 0 11 11"><path d="M0 4.500h11v2H0zM4.500 0h2v11h-2z" fill="#777" /></svg>
        </ZoomButton>
        <ZoomLevel>100%</ZoomLevel>
      </StatusBar>

      <Taskbar>
        <Weather>
          <AirIcon />
          <div>
            28°C
            <Muted>Air: Moderate</Muted>
          </div>
        </Weather>
        <TaskButton aria-label="Start"><StartIcon /></TaskButton>
        <SearchBox>
          <SearchIcon />
          <SearchInput type="search" placeholder="Search" aria-label="Search" />
          <OkapiIcon />
        </SearchBox>
        {pinnedApps.map((app) => (
          <TaskButton key={app.label} aria-label={app.label}>
            {app.icon}
            {app.running && <Indicator />}
          </TaskButton>
        ))}
        <TaskButton aria-label="Excel">
          <ActiveTile><ExcelIcon /></ActiveTile>
          <Indicator $active />
        </TaskButton>
        <Tray>
          <TrayButton aria-label="Hidden icons">
            <svg width="16" height="10" viewBox="0 0 16 10" fill="none" stroke="#1b1b1b" strokeWidth="2">
              <path d="M1 9l7-7.500L15 9" />
            </svg>
          </TrayButton>
          <TrayButton $width={48} aria-label="Sync"><SyncIcon /></TrayButton>
          <TrayButton $width={42}>
            <div>
              ENG
              <br />
              IN
            </div>
          </TrayButton>
          <TrayButton $width={120} aria-label="Network, volume and battery">
            <WifiIcon />
            <VolumeIcon />
            <BatteryIcon />
          </TrayButton>
          <TrayButton>
            <Clock>
              10:57
              <br />
              18-10-2023
            </Clock>
            <Badge>4</Badge>
          </TrayButton>
        </Tray>
      </Taskbar>
    </AppWrapper>
  </>
);

export default App;
